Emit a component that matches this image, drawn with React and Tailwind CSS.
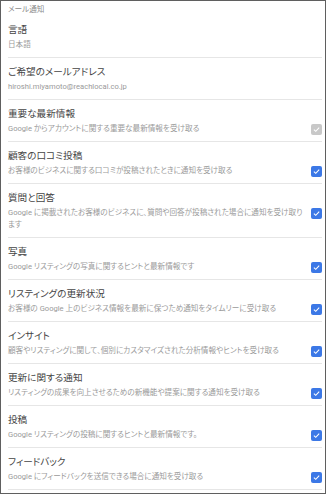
import React from "react";

const items = [
  { title: "重要な最新情報", desc: "Google からアカウントに関する重要な最新情報を受け取る", disabled: true },
  { title: "顧客の口コミ投稿", desc: "お客様のビジネスに関する口コミが投稿されたときに通知を受け取る" },
  { title: "質問と回答", desc: "Google に掲載されたお客様のビジネスに、質問や回答が投稿された場合に通知を受け取ります" },
  { title: "写真", desc: "Google リスティングの写真に関するヒントと最新情報です" },
  { title: "リスティングの更新状況", desc: "お客様の Google 上のビジネス情報を最新に保つため通知をタイムリーに受け取る" },
  { title: "インサイト", desc: "顧客やリスティングに関して、個別にカスタマイズされた分析情報やヒントを受け取る" },
  { title: "更新に関する通知", desc: "リスティングの成果を向上させるための新機能や提案に関する通知を受け取る" },
  { title: "投稿", desc: "Google リスティングの投稿に関するヒントと最新情報です。" },
  { title: "フィードバック", desc: "Google にフィードバックを送信できる場合に通知を受け取る" },
];

function Check({ disabled }) {
  return (
    <div
      className={
        "mt-[1px] flex h-[11px] w-[11px] shrink-0 items-center justify-center rounded-[2px] " +
        (disabled ? "bg-[#c8c8c8]" : "bg-[#3c78e6]")
      }
    >
      <svg viewBox="0 0 12 12" className="h-[9px] w-[9px]">
        <path d="M2.5 6.2 L5 8.5 L9.6 3.6" fill="none" stroke="white" strokeWidth="1.4" />
      </svg>
    </div>
  );
}

function Section({ title, desc, check, disabled }) {
  return (
    <div className="border-b border-[#e6e6e6] pt-[8px] pb-[6px]">
      <div className="text-[9.6px] leading-[12px] text-[#444444]">{title}</div>
      <div className="mt-[3px] flex items-start gap-[7px]">
        <div className="flex-1 text-[7.6px] leading-[12px] text-[#9a9a9a]">{desc}</div>
        {check && <Check disabled={disabled} />}
      </div>
    </div>
  );
}

export default function App() {
  return (
    <div
      className="box-border h-[494px] w-[326px] overflow-hidden border border-[#5f5f5f] bg-white pl-[7px] pr-[3px] [font-feature-settings:'palt']"
      style={{ fontFamily: 'Roboto, "Noto Sans CJK JP", sans-serif' }}
    >
      <div className="pt-[3px] text-[7.6px] leading-[12px] text-[#8a8a8a]">メール通知</div>
      <Section title="言語" desc="日本語" />
      <Section title="ご希望のメールアドレス" desc="hiroshi.miyamoto@reachlocal.co.jp" />
      {items.map((it) => (
        <Section key={it.title} title={it.title} desc={it.desc} check disabled={it.disabled} />
      ))}
    </div>
  );
}
